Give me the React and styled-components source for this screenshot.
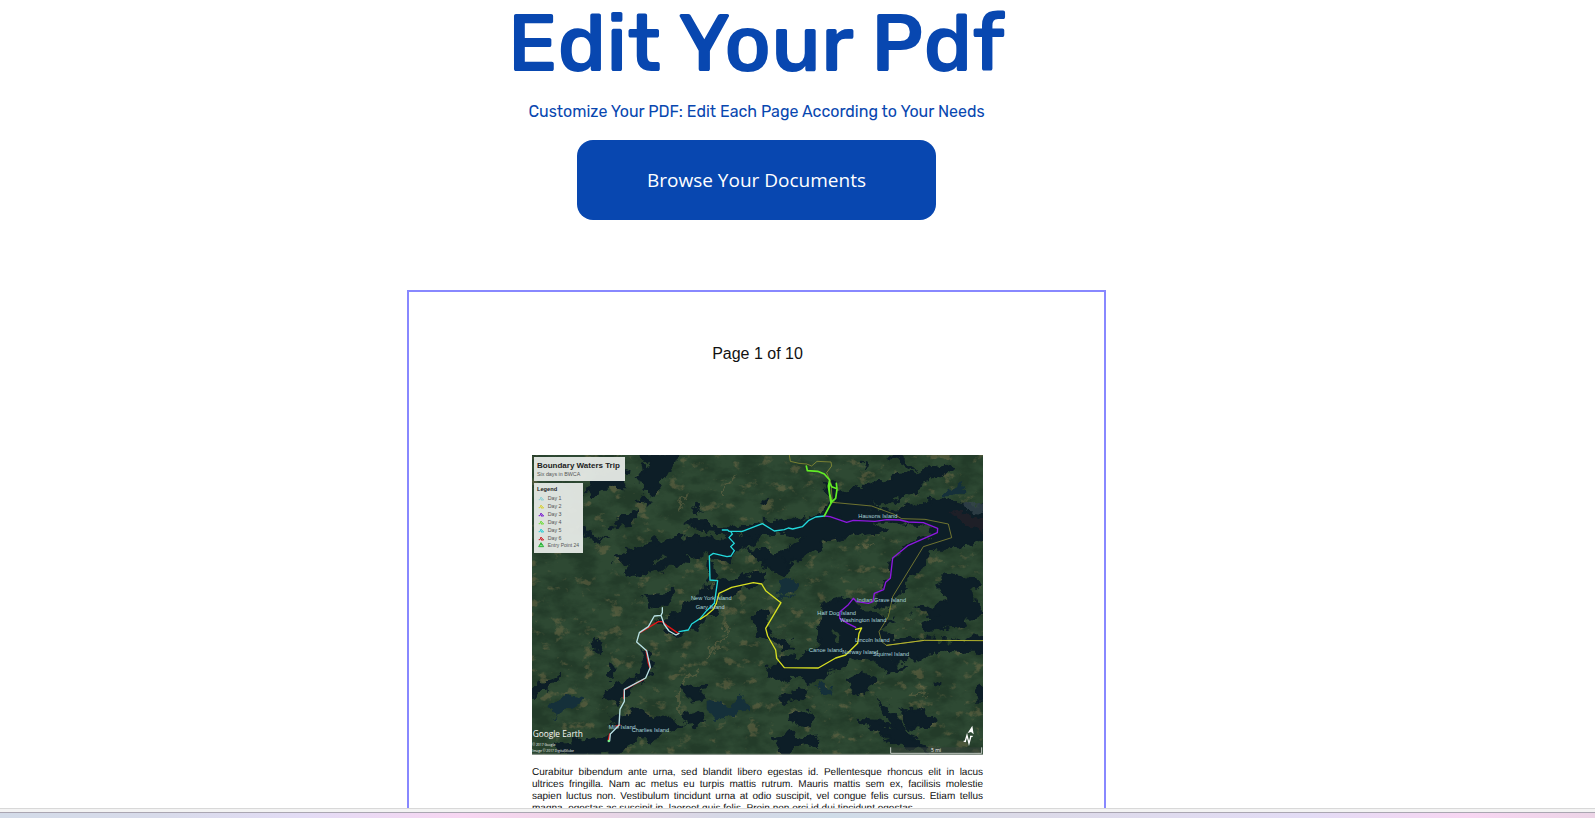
import React from "react";
import styled, { createGlobalStyle } from "styled-components";

const GlobalStyle = createGlobalStyle`
  *, *::before, *::after { box-sizing: border-box; }
  html, body { margin: 0; background: #fff; }
`;

const Shell = styled.div`
  display: flex;
  flex-direction: column;
  height: 100vh;
  overflow: hidden;
`;

const Viewport = styled.main`
  flex: 1;
  min-height: 0;
  overflow: hidden;
  padding-right: 82px;
  display: flex;
  flex-direction: column;
  align-items: center;
`;

const Title = styled.h1`
  margin: 0;
  font: 500 80px/88px Rubik, Roboto, sans-serif;
  color: #0847b0;
`;

const Subtitle = styled.p`
  margin: 12px 0 16px;
  font: 400 16px/24px Rubik, Roboto, sans-serif;
  color: #0847b0;
`;

const BrowseButton = styled.button`
  flex: none;
  width: 359px;
  height: 80px;
  padding: 0;
  border: 0;
  border-radius: 16px;
  background: #0847b0;
  color: #fff;
  font: 400 19px/28px "Segoe UI", "Open Sans", sans-serif;
  cursor: pointer;
`;

const PageFrame = styled.section`
  flex: none;
  width: 699px;
  max-width: 100%;
  margin-top: 70px;
  padding: 52px 121px 96px 123px;
  border: 2px solid #8888ff;
`;

const PageCounter = styled.p`
  margin: 0 0 91px;
  font: 16px/20px "Liberation Sans", Arial, sans-serif;
  text-align: center;
  color: #111;
`;

const MapPicture = styled.svg`
  display: block;
  width: 100%;
  height: auto;
`;

const Paragraph = styled.p`
  margin: 12px 0 0;
  font: 10px/12px "Liberation Sans", Arial, sans-serif;
  text-rendering: geometricPrecision;
  color: #111;
`;

const Line = styled.span`
  display: block;
  text-align: justify;
  text-align-last: ${(p) => (p.$last ? "left" : "justify")};
`;

const WindowEdge = styled.div`
  flex: none;
  height: 5px;
  background: #f3f3f3;
  border-top: 1px solid #d8d8d8;
  border-bottom: 1px solid #aaa6b2;
`;

const DesktopStrip = styled.footer`
  flex: none;
  height: 5px;
  background: linear-gradient(
    90deg,
    #d3dbe8 0%, #d8dbea 10%, #e3dcf5 19%, #f8d6f2 29%, #efd4e6 36%,
    #d6d8e6 45%, #cfdce8 52%, #dcdae8 64%, #e3dcf5 82%, #f8d6f2 92%, #ecd4e6 100%
  );
`;

const lakes = [
  "M345 15 452 15 440 50 425 78 405 88 408 105 385 126 350 122 355 98 335 92 352 75 365 60 380 40 350 30Z",
  "M185 138 200 90 222 70 302 60 300 92 290 118 245 116 225 120 210 135Z",
  "M340 148 358 142 378 152 370 164 350 162Z",
  "M265 232 285 198 305 190 335 175 337 200 315 225 290 228 275 240Z",
  "M160 232 195 250 238 262 215 268 170 252Z",
  "M268 325 330 295 400 272 480 265 560 258 590 270 610 245 640 262 700 250 702 272 650 290 625 322 600 332 560 320 520 312 480 318 494 346 440 338 420 352 400 360 370 366 340 376 300 366 320 345 280 338Z",
  "M465 214 530 220 600 236 660 228 712 212 760 220 840 206 900 190 980 210 1050 225 1085 240 1020 246 950 262 900 275 870 300 820 332 750 328 742 310 780 300 815 275 840 260 760 250 700 262 600 245 520 238Z",
  "M895 195 912 158 1010 164 1100 184 1180 165 1240 148 1300 160 1394 165 1394 262 1310 292 1230 290 1205 340 1170 370 1135 420 1110 450 1085 480 1040 470 1075 410 1092 390 1100 330 1140 290 1238 250 1200 225 1100 215 970 216Z",
  "M935 118 970 128 1000 112 1060 92 1130 75 1190 58 1255 42 1268 66 1220 88 1190 92 1180 122 1120 148 1060 165 980 165 925 150Z",
  "M1092 15 1125 18 1150 42 1175 52 1150 50 1115 30Z",
  "M900 95 935 100 950 128 915 140 905 120Z",
  "M1240 385 1285 372 1330 382 1374 405 1345 430 1350 455 1374 480 1350 500 1300 530 1210 540 1185 528 1235 500 1170 482 1265 455 1240 420Z",
  "M880 470 950 448 1010 470 1050 490 1105 512 1065 556 1150 566 1300 572 1394 552 1394 606 1250 605 1200 615 1170 632 1090 628 1132 655 1082 668 1040 622 1000 625 960 640 900 680 860 692 790 690 740 690 720 665 750 640 775 625 850 612 890 575 875 540 890 510Z",
  "M520 410 560 408 610 382 650 380 715 360 722 398 650 424 594 440 570 490 505 535 470 555 430 540 425 520 440 500 500 455 510 430Z",
  "M355 435 450 430 425 465 400 475 385 470 370 458Z",
  "M385 505 440 500 455 530 450 545 425 540 410 520Z",
  "M668 292 730 305 802 338 785 375 752 378 735 350 700 330Z",
  "M685 492 720 482 732 535 760 560 805 572 806 596 770 594 730 572 700 556 688 530Z",
  "M548 340 570 345 575 385 555 392 545 370Z",
  "M200 580 215 570 236 588 225 604 205 600Z",
  "M252 655 266 655 264 680 252 682Z",
  "M245 722 285 698 328 688 320 730 285 748 275 760 250 740Z",
  "M355 600 385 635 380 675 345 695 325 690 355 660Z",
  "M21 715 60 695 104 672 82 705 60 725 21 740Z",
  "M470 705 510 712 536 718 530 750 500 755 484 735Z",
  "M475 795 515 785 545 800 520 825 490 830 472 815Z",
  "M805 715 845 720 848 745 820 756 803 742Z",
  "M755 740 802 735 800 755 775 764Z",
  "M975 690 1010 670 1045 680 1040 710 1010 735 975 722Z",
  "M1228 700 1244 700 1243 712 1230 712Z",
  "M1346 712 1390 700 1390 750 1352 750Z",
  "M1060 755 1085 770 1110 790 1140 830 1160 862 1210 890 1205 905 1130 885 1080 862 1008 812 1060 815 1080 832 1105 835 1078 790Z",
  "M1130 785 1180 775 1225 805 1215 832 1180 842 1150 832Z",
  "M790 800 845 782 868 800 845 825 795 812Z",
  "M745 860 800 850 830 870 880 862 880 882 825 888 790 912 760 900Z",
  "M250 800 290 805 340 778 380 800 440 805 475 830 400 860 330 870 280 905 100 910 88 890 150 870 235 862 270 835Z",
  "M510 172 538 180 525 188 512 182Z",
  "M718 148 728 146 726 158 718 158Z",
  "M1010 38 1022 40 1018 60 1012 55Z",
];

const paleLakes = [
  "M1240 142 1265 108 1322 95 1310 125 1278 142Z",
  "M750 420 765 392 795 386 820 400 808 425 780 445Z",
  "M65 780 80 760 130 735 168 745 145 775 90 798Z",
  "M545 750 600 765 640 740 680 762 672 790 600 798 580 815 545 775Z",
  "M868 715 890 700 925 712 925 738 900 742Z",
];

const islands = [
  "M378 338 405 322 408 334 385 346Z",
  "M565 262 595 250 612 262 590 270Z",
  "M1000 465 1060 468 1080 490 1020 484Z",
  "M925 545 955 560 945 575 922 562Z",
  "M740 540 790 555 770 570 750 560Z",
  "M1130 520 1160 505 1190 520 1150 530Z",
];

const labels = [
  [1000, 205, "Hausons Island"],
  [498, 450, "New York Island"],
  [512, 476, "Gary Island"],
  [996, 456, "Indian Grave Island"],
  [877, 495, "Half Dog Island"],
  [945, 517, "Washington Island"],
  [990, 576, "Lincoln Island"],
  [852, 607, "Canoe Island"],
  [952, 612, "Norway Island"],
  [1044, 619, "Squirrel Island"],
  [251, 837, "Mile Island"],
  [320, 845, "Charlies Island"],
];

const legend = [
  ["Day 1", "#8fd0d4"],
  ["Day 2", "#d8d03a"],
  ["Day 3", "#7a1fd0"],
  ["Day 4", "#6fdc3a"],
  ["Day 5", "#2ccfd6"],
  ["Day 6", "#d0202a"],
];

const PlaceLabel = styled.text`
  font: 17px "Liberation Sans", Arial, sans-serif;
  fill: #a9d3da;
`;

const LegendText = styled.text`
  font: ${(p) => (p.$bold ? 700 : 400)} ${(p) => p.$size || 16}px "Liberation Sans", Arial, sans-serif;
  fill: ${(p) => (p.$bold ? "#222" : "#555")};
`;

const MapCredit = styled.text`
  font: ${(p) => p.$size}px "Open Sans", sans-serif;
  fill: #f4f7f4;
`;

function TripMap() {
  return (
    <MapPicture viewBox="21 15 1353 900" role="img" aria-label="Boundary Waters Trip map">
      <defs>
        <filter id="grain" x="0" y="0" width="100%" height="100%" colorInterpolationFilters="sRGB">
          <feTurbulence type="fractalNoise" baseFrequency="0.014 0.024" numOctaves="6" seed="4" />
          <feColorMatrix values="0 0 0 0 0.08  0 0 0 0 0.16  0 0 0 0 0.11  3 0 0 0 -1.1" />
        </filter>
        <filter id="scrub" x="0" y="0" width="100%" height="100%" colorInterpolationFilters="sRGB">
          <feTurbulence type="fractalNoise" baseFrequency="0.024 0.032" numOctaves="5" seed="11" />
          <feColorMatrix values="0 0 0 0 0.5  0 0 0 0 0.45  0 0 0 0 0.3  0 7 0 0 -4.3" />
        </filter>
        <filter id="shore" x="-10%" y="-10%" width="120%" height="120%" colorInterpolationFilters="sRGB">
          <feTurbulence type="fractalNoise" baseFrequency="0.03" numOctaves="5" seed="7" result="n" />
          <feDisplacementMap in="SourceGraphic" in2="n" scale="50" xChannelSelector="R" yChannelSelector="G" />
        </filter>
      </defs>

      <rect x="21" y="15" width="1353" height="900" fill="#2e4933" />
      <rect x="21" y="15" width="1353" height="900" filter="url(#grain)" opacity="0.42" />
      <rect x="21" y="15" width="1353" height="900" filter="url(#scrub)" opacity="0.42" />
      <g fill="none" stroke="#6e6a48" strokeWidth="5" opacity="0.55" filter="url(#shore)">
        <path d="M590 512 608 540 595 585 560 600 545 630M520 660 480 695 462 725 462 795" />
        <path d="M640 80 600 110 590 140M480 130 460 190M1150 740 1200 730 1180 705M1050 280 1010 290" />
      </g>

      <g filter="url(#shore)">
        <g fill="#0d1e27" stroke="#0d1e27" strokeWidth="5">{lakes.map((d) => <path key={d} d={d} />)}</g>
        <g fill="#15303a">{paleLakes.map((d) => <path key={d} d={d} />)}</g>
        <g fill="#29412e">{islands.map((d) => <path key={d} d={d} />)}</g>
        <path fill="#2a2028" opacity="0.6" d="M1270 185 1330 190 1384 215 1384 250 1310 220Z" />
        <path fill="#35434c" opacity="0.8" d="M1315 160 1340 152 1384 165 1384 190 1335 180Z" />
      </g>

      <g fill="none" strokeLinejoin="round" strokeLinecap="round">
        <g stroke="#a09f35" strokeWidth="2">
          <path d="M793 15 796 34 822 40 845 42 860 48 876 34 918 36 920 48 905 68 918 100 922 157 1040 168 1105 192 1130 206 1200 208 1270 222 1280 263 1195 290 1103 440 1090 500 1062 545 1070 575 1085 586 1198 571" />
          <path stroke="#b5b52e" strokeWidth="3" d="M1085 586 1198 571 1374 572" />
        </g>
        <path stroke="#23d9dc" strokeWidth="4" d="M592 240 608 240 612 244 652 244 712 221 748 243 778 239 790 234 803 237 832 230 850 212 872 201 898 198M618 246 622 252 612 263 628 280 617 290 628 302 618 318 606 320 565 310 553 318 555 390 578 392 568 460 545 482 525 506 500 522 490 540 462 545" />
        <path stroke="#d9e022" strokeWidth="4" d="M525 508 545 495 565 478 574 460 582 430 620 412 685 398 710 402 722 422 768 458 722 535 728 558 752 600 755 625 778 653 880 654 932 624 962 615 998 580 1002 550 1010 534 992 538" />
        <path stroke="#8d18df" strokeWidth="4" d="M898 198 915 200 965 217 985 211 1050 214 1085 209 1125 210 1150 216 1195 218 1238 235 1237 248 1150 286 1103 324 1096 385 1082 397 1076 419 1048 430 1044 455 1030 460 995 455 985 445 970 464 945 485 944 505 968 520 992 532" />
        <path stroke="#62ed25" strokeWidth="5" d="M844 48 847 62 878 64 898 72 914 90 910 108 918 160 898 198M918 158 932 145 936 118 934 100M913 96 920 110 936 116M912 100 914 130 920 158" />
        <path stroke="#e01515" strokeWidth="4" d="M460 550 425 526 412 515 400 515 345 548M363 600 370 640 375 655M356 688 330 702 298 720 296 745M285 825 275 828M254 852 250 870" />
        <path stroke="#b9e1e4" strokeWidth="4" d="M412 473 412 488 408 496 388 498 370 530 343 548 335 576 365 602 376 652 362 684 298 718 298 754 285 778 282 826 256 852 254 872M408 496 417 522 432 543 453 555 462 550" />
        <path stroke="#7cf38a" strokeWidth="7" d="M251 873 252 873" />
      </g>

      {labels.map(([x, y, name]) => (
        <PlaceLabel key={name} x={x} y={y}>{name}</PlaceLabel>
      ))}

      <rect x="27" y="21" width="273" height="72" fill="#e4e8e4" opacity="0.96" />
      <LegendText x="36" y="53" $size={24} $bold>Boundary Waters Trip</LegendText>
      <LegendText x="36" y="79" $size={16}>Six days in BWCA</LegendText>

      <rect x="27" y="99" width="147" height="210" fill="#e4e8e4" opacity="0.96" />
      <LegendText x="36" y="123" $size={17} $bold>Legend</LegendText>
      {legend.map(([name, color], i) => (
        <g key={name}>
          <path
            fill="none"
            stroke={color}
            strokeWidth="3"
            d={`M41 ${149 + i * 24}h4l3-8 3 5-3 4h8l-4-5`}
          />
          <LegendText x="68" y={150 + i * 24}>{name}</LegendText>
        </g>
      ))}
      <path d="M41 290 48 278 56 290ZM45 284h7" fill="#8ff08f" stroke="#2cae3a" strokeWidth="3" />
      <LegendText x="68" y="291" $size={15}>Entry Point 24</LegendText>

      <MapCredit x="23" y="860" $size={25}>Google Earth</MapCredit>
      <MapCredit x="22" y="888" $size={10}>© 2017 Google</MapCredit>
      <MapCredit x="22" y="907" $size={10}>Image © 2017 DigitalGlobe</MapCredit>

      <path fill="#fff" d="M1342 827 1346 853 1338 846 1328 849Z" />
      <path fill="none" stroke="#fff" strokeWidth="4" d="M1320 876 1326 856 1332 880 1338 858M1316 874h7M1335 859h8" />
      <rect x="1097" y="892" width="273" height="18" fill="#39433c" opacity="0.55" />
      <path fill="none" stroke="#c6ccc6" strokeWidth="3" d="M1097 892V910H1370V892" />
      <MapCredit x="1218" y="906" $size={15}>5 mi</MapCredit>
      <path stroke="#9aa39c" strokeWidth="3" d="M21 913H1374" />
    </MapPicture>
  );
}

const paragraphLines = [
  "Curabitur bibendum ante urna, sed blandit libero egestas id. Pellentesque rhoncus elit in lacus",
  "ultrices fringilla. Nam ac metus eu turpis mattis rutrum. Mauris mattis sem ex, facilisis molestie",
  "sapien luctus non. Vestibulum tincidunt urna at odio suscipit, vel congue felis cursus. Etiam tellus",
  "magna, egestas ac suscipit in, laoreet quis felis. Proin non orci id dui tincidunt egestas.",
];

export default function App() {
  return (
    <>
      <GlobalStyle />
      <Shell>
        <Viewport>
          <Title>Edit Your Pdf</Title>
          <Subtitle>Customize Your PDF: Edit Each Page According to Your Needs</Subtitle>
          <BrowseButton type="button">Browse Your Documents</BrowseButton>
          <PageFrame>
            <PageCounter>Page 1 of 10</PageCounter>
            <TripMap />
            <Paragraph>
              {paragraphLines.map((line, i) => (
                <Line key={line} $last={i === paragraphLines.length - 1}>{line}</Line>
              ))}
            </Paragraph>
          </PageFrame>
        </Viewport>
        <WindowEdge />
        <DesktopStrip />
      </Shell>
    </>
  );
}
